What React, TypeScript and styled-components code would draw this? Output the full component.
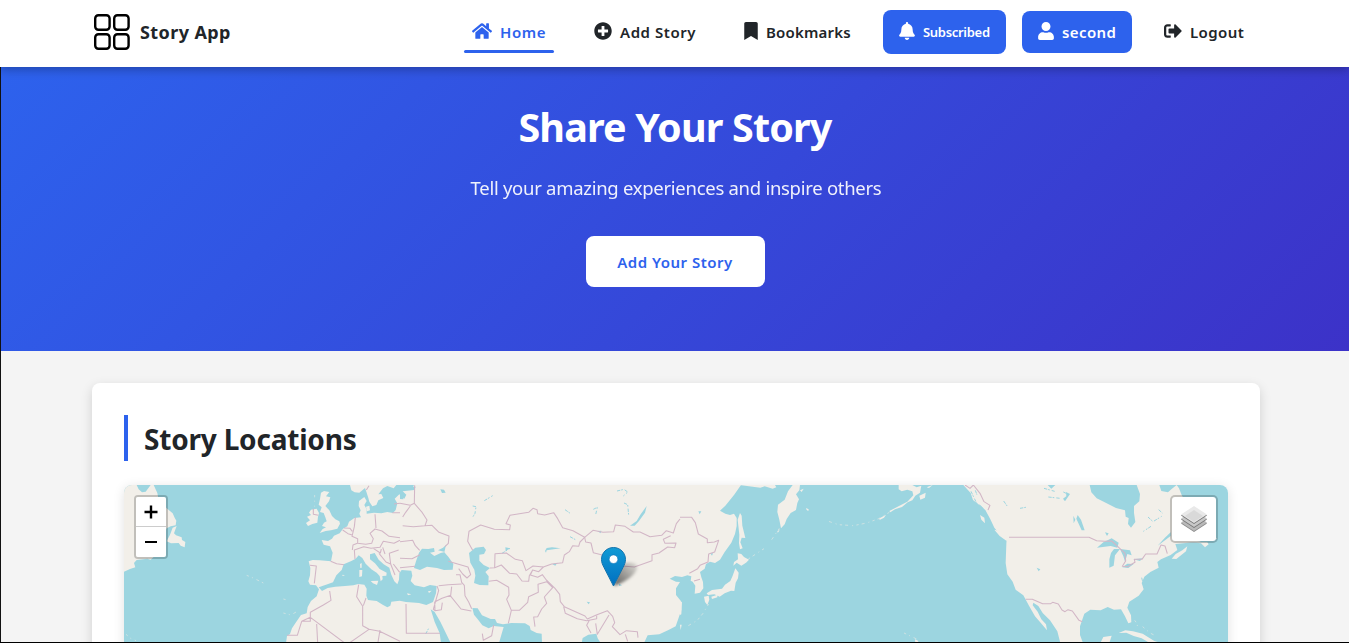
import React from "react";
import styled, { createGlobalStyle } from "styled-components";
import { FaHome, FaPlusCircle, FaBookmark, FaBell, FaUser, FaSignOutAlt } from "react-icons/fa";

const Global = createGlobalStyle`
  * { box-sizing: border-box; }
  html, body { margin: 0; height: 643px; overflow: hidden; }
  body { background: #f4f4f4; color: #212529; font-family: "Noto Sans", "Open Sans", sans-serif; }
`;

const Page = styled.div`
  height: 643px;
  display: flex;
  flex-direction: column;
  overflow: hidden;
  border-bottom: 1px solid #000;
`;

const Header = styled.header`
  flex: none;
  height: 67px;
  position: relative;
  z-index: 2;
  background: #fff;
  box-shadow: 0 2px 10px rgba(0, 0, 0, 0.3);
  display: flex;
  align-items: center;
  justify-content: space-between;
  padding: 0 97px 3px 92px;
`;

const Brand = styled.div`
  display: flex;
  align-items: center;
  gap: 8px;
`;

const BrandName = styled.span`
  font-size: 18px;
  font-weight: 700;
  line-height: 26px;
  letter-spacing: 0.4px;
  white-space: nowrap;
`;

const Nav = styled.nav`
  display: flex;
  align-items: center;
`;

const NavLink = styled.a<{ $width: number; $before: number; $active?: boolean }>`
  width: ${(p) => p.$width}px;
  margin-left: ${(p) => p.$before}px;
  height: 42px;
  padding: 0 8px;
  display: flex;
  align-items: center;
  gap: 8px;
  color: ${(p) => (p.$active ? "#2d62ed" : "#212529")};
  position: relative;
  &::after {
    content: "";
    display: ${(p) => (p.$active ? "block" : "none")};
    position: absolute;
    left: 0;
    right: 0;
    bottom: 0;
    height: 3px;
    border-radius: 2px;
    background: #2d62ed;
  }
`;

const NavButton = styled.button<{ $width: number; $height: number; $before: number }>`
  width: ${(p) => p.$width}px;
  height: ${(p) => p.$height}px;
  margin-left: ${(p) => p.$before}px;
  padding: 0 16px;
  border: 0;
  border-radius: 8px;
  background: #2d62ed;
  color: #fff;
  font-family: inherit;
  display: flex;
  align-items: center;
  gap: 8px;
`;

const Icon = styled.span<{ $width: number }>`
  flex: none;
  width: ${(p) => p.$width}px;
  height: 18px;
  margin-top: -3px;
  svg { display: block; width: 100%; height: 100%; }
`;

const Label = styled.span<{ $size?: number; $track?: number }>`
  font-size: ${(p) => p.$size ?? 15}px;
  letter-spacing: ${(p) => p.$track ?? 0}px;
  font-weight: 600;
  white-space: nowrap;
`;

const Main = styled.main`
  flex: 1;
  min-height: 0;
  border-left: 1px solid #111;
  overflow: hidden;
`;

const Hero = styled.section`
  height: 284px;
  background: linear-gradient(135deg, #2d62ed, #3c32c8);
  color: #fff;
  display: flex;
  flex-direction: column;
  align-items: center;
  padding: 33px 0 0;
`;

const HeroTitle = styled.h1`
  margin: 0;
  font-size: 39.500px;
  line-height: 55px;
  font-weight: 700;
  letter-spacing: -0.85px;
`;

const HeroText = styled.p`
  margin: 17px 0 33px;
  padding-left: 2px;
  font-size: 18.500px;
  line-height: 31px;
  letter-spacing: -0.28px;
  opacity: 0.92;
`;

const HeroButton = styled.button`
  width: 179px;
  height: 51px;
  padding: 0;
  border: 0;
  border-radius: 8px;
  background: #fff;
  color: #2d62ed;
  font-family: inherit;
`;

const Card = styled.section`
  width: 1168px;
  height: 400px;
  margin: 32px 0 0 91px;
  padding: 32px;
  border-radius: 8px;
  background: #fff;
  box-shadow: 0 4px 12px rgba(0, 0, 0, 0.15);
`;

const CardTitle = styled.h2`
  margin: 0 0 24px;
  height: 46px;
  padding: 1px 0 0 16px;
  border-left: 4px solid #2d62ed;
  font-size: 28px;
  line-height: 46px;
  font-weight: 700;
  letter-spacing: -0.2px;
`;

const MapBox = styled.div`
  position: relative;
  width: 1104px;
  height: 300px;
  border-radius: 8px;
  background: #9cd5e0;
  overflow: hidden;
  > svg { display: block; }
`;

const MapShadow = styled.div`
  border-radius: 8px;
  box-shadow: 0 2px 12px rgba(0, 0, 0, 0.12);
`;

const Zoom = styled.div`
  position: absolute;
  left: 10px;
  top: 10px;
  width: 34px;
  border: 2px solid rgba(0, 0, 0, 0.2);
  background-clip: padding-box;
  border-radius: 4px;
`;

const ZoomButton = styled.button<{ $first?: boolean }>`
  display: flex;
  align-items: center;
  justify-content: center;
  width: 30px;
  height: 30px;
  padding: 0;
  border: 0;
  border-bottom: ${(p) => (p.$first ? "1px solid #ccc" : "0")};
  border-radius: ${(p) => (p.$first ? "2px 2px 0 0" : "0 0 2px 2px")};
  background: #fff;
`;

const Layers = styled.button`
  position: absolute;
  right: 10px;
  top: 10px;
  width: 48px;
  height: 48px;
  padding: 0;
  display: flex;
  align-items: center;
  justify-content: center;
  border: 2px solid rgba(0, 0, 0, 0.2);
  border-radius: 5px;
  background: #fff;
  background-clip: padding-box;
`;

const Pin = styled.div`
  position: absolute;
  left: 477px;
  top: 62px;
  svg { display: block; overflow: visible; }
`;

const Logo = () => (
  <svg width="40" height="40" viewBox="0 0 40 40" fill="none" stroke="#000" strokeWidth="2.4">
    <rect x="3.2" y="3.2" width="14.4" height="14.6" rx="3.2" />
    <rect x="22.2" y="3.2" width="14.4" height="14.6" rx="3.2" />
    <rect x="3.2" y="22.2" width="14.4" height="14.6" rx="3.2" />
    <rect x="22.2" y="22.2" width="14.4" height="14.6" rx="3.2" />
  </svg>
);

const Land = styled.path`fill: #f2efe9;`;
const Water = styled.path`fill: #9cd5e0;`;
const Border = styled.path`fill: none; stroke: #d2b6c6; stroke-width: 3.2; stroke-linejoin: round;`;
const Isles = styled.path`fill: none; stroke: #d3e3e2; stroke-width: 2.6; stroke-dasharray: 7 10 3 12 9 9;`;
const Stream = styled.path`fill: none; stroke: #9cd5e0; stroke-width: 3; stroke-dasharray: 10 3 5 6;`;

const WorldMap = () => (
  <svg width="1104" height="158" viewBox="12 15 3312 474">
    {/* Atlantic, Europe and Africa */}
    <Land d="M12 15H50L56 28 66 37 77 35 92 15H101L112 39 116 60 140 85 150 93 158 100 164 113 169 122 167 136 152 139 140 145 100 232 92 239 82 236 50 240 42 249 46 262 30 267 12 275Z" />
    <Land d="M170 138L158 143 150 164 140 184 153 190 176 189 182 197 194 202 196 186 186 180 185 172 168 166 162 160Z" />
    <Land d="M603 38L612 33 628 36 618 49 631 52 627 64 616 78 628 91 636 108 646 118 658 124 660 131 652 146 633 151 617 153 599 159 608 147 618 142 606 138 612 128 620 124 616 112 611 99 600 96 605 82 596 74 600 57Z" />
    <Land d="M573 89L590 86 597 99 594 110 592 128 577 132 564 138 558 129 570 121 561 110 573 105 567 98Z" />
    <Land d="M605 180L624 183 636 176 642 167 659 160 669 146 682 139 687 125 703 114 723 112 718 101 722 91 716 78 717 63 733 51 740 63 733 75 740 88 740 101 762 98 784 100 802 96 819 99 827 90 832 70 824 56 838 43 853 56 859 44 848 34 883 30 887 20 842 20 842 15H1863L1842 45 1816 77 1800 92 1816 101 1830 105 1842 101 1850 114 1850 138 1845 162 1834 188 1814 216 1800 239 1785 249 1770 245 1758 252 1754 266 1740 276 1744 292 1749 306 1750 325 1740 338 1724 341 1726 317 1718 305 1712 302 1714 289 1702 286 1686 291 1665 288 1649 296 1668 305 1680 306 1668 325 1668 345 1682 362 1684 390 1676 413 1667 439 1647 449 1618 463 1583 466 1572 489H498L501 468 510 462 516 445 527 428 543 405 560 400 563 381 573 363 590 349 597 328 588 316 570 314 565 304 570 286 571 264 566 244 578 240 599 241 633 244 638 218 630 199 611 194Z" />
    <Land d="M690 15L694 31 704 37 718 38 735 24 739 35 745 54 748 65 757 79 769 75 775 61 790 54 784 42 775 43 789 25 802 18 821 25 829 15Z" />
    <Land d="M738 80L748 77 750 91 741 94Z" />
    <Water d="M596 322L618 314 639 307 649 286 665 270 671 253 694 243 707 236 716 226 727 234 737 251 754 268 770 278 779 288 782 304 788 298 787 288 799 287 800 278 779 267 765 250 750 238 750 223 764 219 776 239 791 253 808 263 814 284 823 304 832 313 837 299 838 280 845 270 874 272 877 287 872 303 884 316 912 322 930 315 950 318 948 340 939 366 919 375 897 369 858 366 839 362 814 365 811 377 802 382 788 374 770 363 744 360 739 347 740 326 733 314 715 312 700 316 675 318 646 320 623 324 606 333Z" />
    <Land d="M752 303L775 302 771 315 759 310ZM718 270H727L726 289 718 291ZM720 252L725 249 725 263 721 264ZM861 340L874 343 864 346ZM924 334L935 332 927 339ZM668 284L675 286 667 288Z" />
    <Isles d="M380 286L402 295 430 309M490 357L505 361M490 399L513 405 530 395M18 463L32 475 48 482M584 45L584 80" />

    {/* Asia */}
    <g transform="translate(840 0)">
      <Water d="M42 264L48 244 57 218 66 206 85 207 102 204 104 215 90 218 103 228 122 219 135 216 114 211 129 203 138 195 133 217 146 232 160 252 158 269 132 270 111 264 81 260 60 270Z" />
      <Water d="M207 219L226 203 251 200 258 210 252 222 238 224 238 242 251 255 270 264 256 276 266 289 265 316 239 315 222 309 226 287 223 269 211 248Z" />
      <Water d="M0 15H42L37 25 0 32ZM0 39H12L10 58 0 57Z" />
      <Water d="M92 388L104 396 121 425 136 456 152 489H123L119 460 104 426ZM217 384L233 385 246 406 272 417 285 417 291 429 309 433 334 429 375 430 389 438 392 450 410 459 425 461 426 489H297L305 461 311 441 281 438 266 445 247 436 232 416 222 404Z" />
      <Water d="M545 489L548 474 565 464 589 461 593 475 602 489ZM740 78L735 98 717 123 704 137 690 137 710 123 721 104ZM435 213L440 204 456 202 482 205 440 211 438 218ZM457 253L472 248 466 257ZM592 153L604 152 602 160ZM121 28L132 29 137 38 126 39ZM316 202L330 205 317 213ZM657 311L666 316 657 318ZM560 365L570 367 566 373Z" />
      <Stream d="M218 78L228 80 225 100 219 110M253 62L278 47M651 33L672 28 683 36 670 48M672 69L683 74 686 105M580 88L592 82 587 104M495 89L512 101M510 170L530 181M306 220L330 205M77 462L86 445" />
      <Border d="M0 70L31 76 43 70 67 98 81 120 75 137 96 136 117 157 147 168 145 190 135 200M44 16L43 70M8 111L17 97 31 78M8 137L40 140 75 137M0 185L38 181 46 197 59 211M0 235L36 236 60 224M0 263L45 259" />
      <Border d="M218 211L203 184 207 154 242 135 283 148 329 149 331 135 318 131 330 106 386 97 399 85 411 89 413 101 434 105 461 98 473 116 488 143 519 152 554 172 540 186 536 199 518 197 508 215 493 225 488 248 455 252 430 261 399 258 378 272 367 242 346 238 319 219 285 221 284 263 270 264" />
      <Border d="M554 172L579 151 609 157 641 155 646 135 675 139 700 156 720 156 750 170 785 166 799 152 820 159 829 131 840 117M554 172L557 186 573 189 580 218 604 224 617 240 666 258 703 261 756 242 756 224 777 219 803 201 824 203 828 189 795 190 790 178 812 167" />
      <Border d="M284 263L304 255 329 280 350 282 366 303 386 304 388 287 398 270 416 275 430 261M266 304L290 301 326 322 327 345 320 358 334 391 325 430M334 391L358 391 383 367 386 350 415 337 414 313 440 305 458 323 433 351 440 370 425 387 413 410 401 411 405 440M398 270L391 285 413 292 427 284 439 300 465 325 479 343 481 365 493 380 555 408 562 417 589 405 622 392 638 409 644 428 637 440 660 464 679 452 712 455 714 473M491 380L496 400 532 416 560 422 590 416 590 407M568 421L560 436 573 459M587 430L592 463 612 430 627 405M676 463L683 484" />
      <Border d="M145 244L173 252 204 261 212 284 201 294 188 282 176 266M168 284L180 284 185 307 193 316 195 347 206 366 215 386M116 317L145 314 185 312M155 320L152 346 126 355 104 366 105 392 124 389 127 368M150 346L183 387 214 393M105 392L100 388 116 331 111 318M18 372L19 460H120M247 461L250 481 275 467 281 435" />
    </g>
    <Border d="M580 86V103L595 106M706 112L703 140 696 169 713 176 713 190 737 193 755 190 760 176 750 160 765 147 786 153 807 169 840 173M672 144L690 145 697 154M668 150L684 161 697 165M765 103L768 144M697 210L699 195 712 190M705 237L703 210 731 200 753 205 780 202 790 184 822 190 840 181M760 205L781 219 784 207M777 220L798 246 812 252 808 220 836 210M632 244L650 251 672 254M570 256L589 258 583 310M629 333L633 361 610 375 571 397 571 424H545L532 466H501M545 424L571 412 674 489M590 432L593 489M716 314L710 350 728 379 728 437 747 448 688 489M738 354L730 377M747 448L779 454 840 484M780 450L774 486M739 30L747 17M817 98H840M822 72L840 70M812 252L825 285M820 252L839 277M788 202L795 222" />

    {/* Pacific rim */}
    <g transform="translate(1680 0)">
      <Land d="M178 15H285L289 22 278 26 254 19 241 23 207 19ZM338 15H360L358 31 348 43 357 58 352 69 348 90 332 99 320 117 314 133 303 145 298 119 292 96 294 74 314 59 324 34Z" />
      <Land d="M180 99L185 107 187 137 194 166 196 174 185 173 181 187 188 205 180 208 177 190 178 164 173 119ZM173 220L184 222 192 231 207 239 198 248 184 257 170 248 160 257 162 246 174 238ZM166 265L176 278 174 295 167 308 163 333 153 332 134 340 119 350 103 343 84 345 80 340 96 330 126 326 135 314 151 303 158 287ZM72 350L86 347 88 359 82 375 75 366ZM94 350L112 344 112 352 96 357Z" />
      <Land d="M656 15H697L710 22 724 17 720 38 706 47 697 61 683 67 666 81 645 88 631 97 628 93 657 78 682 65 700 46 697 34 682 29 665 34 656 28ZM718 47L737 38 735 53 721 59ZM740 22L758 15 747 24ZM360 31L371 26 365 36ZM0 362L6 367 4 403 0 405ZM0 434L5 434 2 450Z" />
      <Land d="M596 116L618 104 612 113 600 119ZM378 84L386 88 385 93 380 90ZM290 157L300 147 295 157ZM705 478L714 482 716 489H706Z" />
      <Isles d="M628 97L596 116 560 129 520 137 475 134 440 122M298 145L273 182M252 206L238 215 205 237M86 372L69 400 52 421 20 440M672 459L710 477" />
      <Water d="M55 94H64L59 103ZM91 220H99L96 227Z" />
      <Border d="M0 112H35L46 128 55 162 82 177V188L103 186 116 181 104 216 86 222 84 246 60 256 53 266 28 280M42 303L60 298" />
    </g>

    {/* North America */}
    <g transform="translate(2520 0)">
      <Land d="M10 15L32 39 39 60 59 76 76 90 91 118 103 143 119 163 140 177 139 193 137 249 142 283 158 305 167 329 190 346 207 377 225 409 240 426 261 451 258 433 244 418 233 395 218 376 220 368 235 378 248 399 270 421 292 454 301 489H369L360 465 360 439 373 401 391 389 422 391 443 381 462 389 483 388 495 409 505 430 514 427 513 406 502 383 508 365 536 347 551 328 545 309 553 290 571 276 596 263 592 246 603 238 632 225 652 210 646 192 774 180 710 108 685 82 665 45 657 25 650 15 634 28 624 37 604 33 598 15Z" />
      <Water d="M718 184L774 176V189L740 192Z" />
      <Land d="M635 236L647 222 667 211 682 199 678 214 649 237ZM690 187L723 190 735 202 746 193 742 187ZM60 105L73 113 75 130 64 119ZM103 149L120 154 148 178 139 182 119 168ZM421 489L430 471 455 467 448 489ZM476 459L496 451 519 454 548 461 583 483 600 488 564 486 545 475 521 468 499 458Z" />
      <Water d="M389 15H530L540 42 538 64 522 78 522 99 526 126 513 143 504 132 506 114 497 110 495 91 468 84 437 68 410 55 394 37ZM411 203L430 187 455 175 476 188 472 203 452 198ZM453 219L462 207 480 207 465 226 461 257 448 263 448 238ZM480 207L510 211 515 226 502 222 495 245 490 229ZM487 262L502 251 521 252 505 264ZM520 238L548 235 540 243ZM593 197L614 174 632 157 632 168ZM353 105L363 119 374 151 365 151 349 116ZM340 107L346 119 341 130ZM230 263L241 268 236 274ZM318 36L330 42 315 64 309 56 319 49ZM263 15H286L274 26ZM435 157L446 160 441 168Z" />
      <Stream d="M33 34L50 70 67 81 83 119M46 31L51 45M131 63L144 82M180 85L203 81M252 25L284 34M265 51L301 55M310 36L329 45M564 111L579 125 605 109M573 139L550 154M596 89L607 99M545 293L553 325" />
      <Border d="M15 15L30 25 40 15 60 40 72 65 90 76 84 90M147 172H387L410 182 434 184 455 183 476 202 495 220 497 243 487 259 502 260 525 247 523 238 546 238 557 222H591L603 195 615 198 622 221M197 358H217L248 371H272L278 367 295 372 306 390 315 395 324 389 337 393 357 421 367 425" />
      <Isles d="M524 421L533 433 529 447M548 440L570 459 586 467" />
    </g>
  </svg>
);

const Marker = () => (
  <svg width="25" height="41" viewBox="0 0 25 41">
    <defs>
      <linearGradient id="pinFill" x1="0" y1="0" x2="0" y2="1">
        <stop offset="0" stopColor="#129bd5" />
        <stop offset="1" stopColor="#006fc0" />
      </linearGradient>
      <linearGradient id="pinShade" x1="0" y1="1" x2="1" y2="0">
        <stop offset="0" stopColor="#000" stopOpacity="0.6" />
        <stop offset="1" stopColor="#000" stopOpacity="0.08" />
      </linearGradient>
      <filter id="soft" x="-30%" y="-30%" width="160%" height="160%"><feGaussianBlur stdDeviation="1.7" /></filter>
    </defs>
    <path d="M13 38L18 19Q27 13 35 17Q38 22 32 28Q25 35 13 39Z" fill="url(#pinShade)" filter="url(#soft)" />
    <path d="M12.5.5C5.8.5.5 5.8.5 12.5c0 3 1.1 5.3 2.5 8L12.5 39 22 20.5c1.4-2.7 2.5-5 2.5-8C24.500 5.800 19.200.5 12.500.5Z" fill="url(#pinFill)" stroke="#1474ad" />
    <circle cx="12.500" cy="12.200" r="4.300" fill="#fff" stroke="#1475b8" strokeWidth=".6" />
  </svg>
);

const LayersIcon = () => (
  <svg width="26" height="26" viewBox="0 0 26 26">
    <path d="M0 17.500L13 9l13 8.500L13 26Z" fill="#8b8b8b" />
    <path d="M0 16.500L13 8l13 8.500L13 25Z" fill="#b9b9b9" />
    <path d="M0 13.500L13 5l13 8.500L13 22Z" fill="#777" />
    <path d="M0 12.500L13 4l13 8.500L13 21Z" fill="#c8c8c8" />
    <path d="M0 9.500L13 1l13 8.500L13 18Z" fill="#777" />
    <path d="M0 8.500L13 0l13 8.500L13 17Z" fill="#e9e9e9" />
    <path d="M4 10L13 4l9 6-9 6Z" fill="#d9d9d9" />
  </svg>
);

const App = () => (
  <>
    <Global />
    <Page>
      <Header>
        <Brand>
          <Logo />
          <BrandName>Story App</BrandName>
        </Brand>
        <Nav>
          <NavLink $width={90} $before={0} $active>
            <Icon $width={20}><FaHome /></Icon>
            <Label $track={0.6}>Home</Label>
          </NavLink>
          <NavLink $width={118} $before={32}>
            <Icon $width={18}><FaPlusCircle /></Icon>
            <Label $track={0.55}>Add Story</Label>
          </NavLink>
          <NavLink $width={123} $before={32}>
            <Icon $width={14}><FaBookmark /></Icon>
            <Label $track={0.2}>Bookmarks</Label>
          </NavLink>
          <NavButton $width={123} $height={44} $before={24}>
            <Icon $width={16}><FaBell /></Icon>
            <Label $size={13} $track={-0.3}>Subscribed</Label>
          </NavButton>
          <NavButton $width={110} $height={42} $before={16}>
            <Icon $width={16}><FaUser /></Icon>
            <Label $track={0.4}>second</Label>
          </NavButton>
          <NavLink $width={96} $before={24}>
            <Icon $width={18}><FaSignOutAlt /></Icon>
            <Label $track={0.4}>Logout</Label>
          </NavLink>
        </Nav>
      </Header>
      <Main>
        <Hero>
          <HeroTitle>Share Your Story</HeroTitle>
          <HeroText>Tell your amazing experiences and inspire others</HeroText>
          <HeroButton><Label $track={0.5}>Add Your Story</Label></HeroButton>
        </Hero>
        <Card>
          <CardTitle>Story Locations</CardTitle>
          <MapShadow>
            <MapBox>
              <WorldMap />
              <Pin><Marker /></Pin>
              <Zoom>
                <ZoomButton $first aria-label="Zoom in">
                  <svg width="14" height="14" stroke="#000" strokeWidth="2.4"><path d="M.5 7H13.500M7 .5V13.500" /></svg>
                </ZoomButton>
                <ZoomButton aria-label="Zoom out">
                  <svg width="14" height="14" stroke="#000" strokeWidth="2"><path d="M1 7H13" /></svg>
                </ZoomButton>
              </Zoom>
              <Layers aria-label="Layers"><LayersIcon /></Layers>
            </MapBox>
          </MapShadow>
        </Card>
      </Main>
    </Page>
  </>
);

export default App;
